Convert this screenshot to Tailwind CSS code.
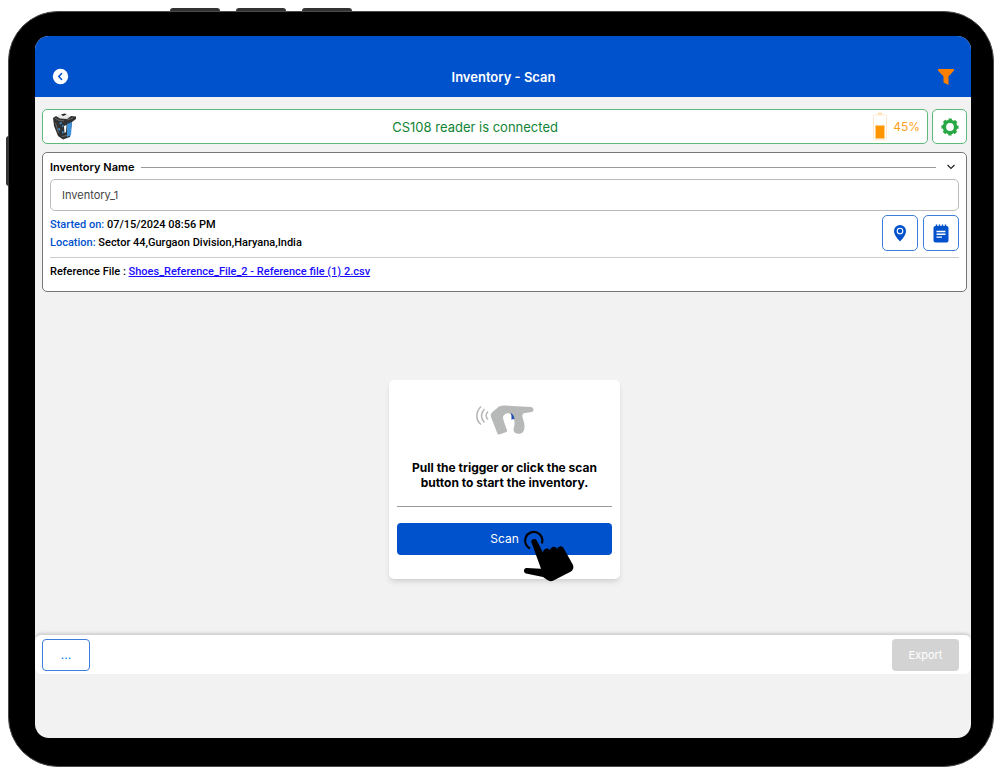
<!DOCTYPE html>
<html lang="en">
<head>
  <meta charset="UTF-8">
  <meta name="viewport" content="width=device-width, initial-scale=1.0">
  <title>Inventory - Scan</title>
  <script src="https://cdn.jsdelivr.net/npm/@tailwindcss/browser@4"></script>
</head>
<body class="bg-white font-['Inter',sans-serif] text-black">
  <div class="flex min-h-screen flex-col pt-2 pr-[6px] pb-[7px] pl-2">
    <!-- Tablet hardware buttons -->
    <div class="flex gap-4 pl-[162px]">
      <span class="h-[3px] w-[50px] rounded-t-sm bg-[#333]"></span>
      <span class="h-[3px] w-[50px] rounded-t-sm bg-[#333]"></span>
      <span class="h-[3px] w-[50px] rounded-t-sm bg-[#333]"></span>
    </div>

    <!-- Tablet frame -->
    <div class="relative flex flex-1 flex-col rounded-[50px] border border-[#4a4a4a] bg-black pt-6 pr-[22px] pb-7 pl-[26px]">
      <span class="absolute top-[124px] -left-[3px] h-[50px] w-[3px] rounded-l-sm bg-[#333]"></span>

      <div class="flex flex-1 flex-col overflow-hidden rounded-[14px] bg-[#f2f2f2]">
        <header class="flex items-center bg-[#0052cc] px-[17px] pt-[30px] pb-[10px]">
          <button type="button" aria-label="Back" class="flex h-[21px] w-[17px] items-center">
            <svg class="h-[17px] w-[17px]" viewBox="0 0 17 17" fill="none">
              <circle cx="8.5" cy="8.5" r="7.7" fill="#fff" />
              <path d="M9.6 5.6 6.8 8.5l2.8 2.9" stroke="#0052cc" stroke-width="1.5" stroke-linecap="round" stroke-linejoin="round" />
            </svg>
          </button>
          <h1 class="flex-1 text-center text-[13px] leading-5 font-semibold text-white">Inventory - Scan</h1>
          <button type="button" aria-label="Filter" class="flex h-[21px] w-4 items-center">
            <svg class="h-[18px] w-4" viewBox="0 0 16 18">
              <path d="M0 1h16v1.400L10.500 8.500v8.500L5.500 14.600V8.500L0 2.400z" fill="#ff7f00" />
            </svg>
          </button>
        </header>

        <main class="flex flex-1 flex-col gap-2 pt-3 pr-1 pl-[7px]">
          <div class="flex gap-1">
            <div class="flex h-[35px] flex-1 items-center rounded-[5px] border border-[#5fb97c] bg-white pr-[7px] pl-[10px]">
              <!-- RFID reader -->
              <svg class="h-[27px] w-6" viewBox="0 0 24 27">
                <path d="M5 2 15 1l2 3-5 3-7-1z" fill="#e9e9e9" />
                <path d="M8 1.5 12 .5l1.5 1L10 3z" fill="#222" />
                <path d="M0 5l3-2 4 2.5 7 .5 4-3 5 .5V6l-4 3-2 15-7 2.500L5 23 1 13z" fill="#2f3133" />
                <path d="M14 11l5-2-1 13-4 2z" fill="#3d8fd6" />
                <path d="M11 13l2.500-1-.5 7-1.500 1z" fill="#fff" />
                <path d="M6 10l3-1-1 2.500zM5 15l2.500 1L6 18zM9 18l2 1-1.500 2zM9 12l2 .5-1.500 2z" fill="#3d9be6" />
                <path d="M2 5l3 2 6 1M2.500 10l3 10M14 7l6-2M9 23.500l5-1" stroke="#777" stroke-width=".8" fill="none" />
              </svg>
              <p class="flex-1 text-center text-[13px] leading-5 text-[#128436]">CS108 reader is connected</p>
              <svg class="mr-[6px] h-[29px] w-[14px]" viewBox="0 0 14 29">
                <path d="M4.500 2.500a2.500 2 0 0 1 5 0z" fill="#ffd9a0" />
                <rect x=".5" y="3" width="13" height="25" rx="1.5" fill="#fff" stroke="#ffe9cc" />
                <rect x="2.5" y="13.5" width="9" height="13" fill="#ff9500" />
              </svg>
              <span class="text-xs text-[#ff9f1a]">45%</span>
            </div>
            <button type="button" aria-label="Reader settings" class="flex h-[35px] w-[35px] items-center justify-center rounded-[5px] border border-[#5fb97c] bg-white">
              <svg class="h-[18px] w-[18px]" viewBox="0 0 18 18" fill="none" stroke="#28a745">
                <circle cx="9" cy="9" r="5.600" stroke-width="3.400" />
                <circle cx="9" cy="9" r="7.600" stroke-width="2" stroke-dasharray="3.400 2.569" stroke-dashoffset="1.700" />
              </svg>
            </button>
          </div>

          <section class="rounded-[5px] border border-[#777] bg-white px-[7px] pb-[10px]">
            <div class="flex h-[26px] items-center gap-[7px] pt-[2px]">
              <label for="inventory-name" class="text-[11px] font-semibold">Inventory Name</label>
              <span class="h-px flex-1 bg-[#999]"></span>
              <button type="button" aria-label="Collapse details" class="flex h-4 w-4 items-center justify-center">
                <svg class="h-[6px] w-2" viewBox="0 0 8 6" fill="none" stroke="#222" stroke-width="1.2">
                  <path d="M.5 1 4 4.5 7.5 1" />
                </svg>
              </button>
            </div>
            <input id="inventory-name" type="text" value="Inventory_1" class="block h-8 w-full rounded-[5px] border border-[#bbb] bg-white px-[11px] text-[11px] text-[#444]">

            <div class="flex items-start justify-between pt-1">
              <div class="pt-px font-['Roboto',sans-serif] text-[11px] leading-[18px] font-medium">
                <p><span class="text-[#0052cc]">Started on:</span> 07/15/2024 08:56 PM</p>
                <p><span class="text-[#0052cc]">Location:</span> Sector 44,Gurgaon Division,Haryana,India</p>
              </div>
              <div class="flex gap-[5px]">
                <button type="button" aria-label="Show location" class="flex h-9 w-9 items-center justify-center rounded-[5px] border border-[#3f7ddd] bg-white">
                  <svg class="h-[17px] w-3" viewBox="0 0 12 17" fill="#0052cc">
                    <path d="M6 0a6 6 0 0 1 6 6c0 3.800-3.300 7.600-6 10.500C3.300 13.600 0 9.800 0 6a6 6 0 0 1 6-6z" />
                    <circle cx="6" cy="6" r="2.800" stroke="#fff" stroke-width="1.100" />
                  </svg>
                </button>
                <button type="button" aria-label="Notes" class="flex h-9 w-9 items-center justify-center rounded-[5px] border border-[#3f7ddd] bg-white">
                  <svg class="h-[19px] w-4" viewBox="0 0 16 19">
                    <rect x=".5" y="2" width="15" height="16.5" rx="2" fill="#0052cc" />
                    <path d="M3.500.5v3M6.500.5v3M9.500.5v3M12.500.5v3" stroke="#0052cc" stroke-width="1.5" />
                    <path d="M3.500 7.500h9M3.500 10.300h9M3.500 13.100h5.500" stroke="#fff" stroke-width="1.4" />
                  </svg>
                </button>
              </div>
            </div>

            <p class="mt-[5px] border-t border-[#ccc] pt-[5px] font-['Roboto',sans-serif] text-[11px] leading-[18px] font-medium">
              Reference File : <a href="#" class="text-[#1a0dff] underline">Shoes_Reference_File_2 - Reference file (1) 2.csv</a>
            </p>
          </section>

          <section class="mt-20 flex w-[231px] flex-col self-center rounded-[5px] bg-white px-2 pt-6 pb-6 shadow-md">
            <!-- Handheld scanner with signal waves -->
            <svg class="h-8 w-[58px] self-center" viewBox="0 0 58 32" fill="none">
              <path d="M5 2.500C-.5 8-.5 16 5 20.500M8.500 5c-4 4-4 9.500 0 13.500M12 7.500c-2.500 2.500-2.500 5.500 0 8" stroke="#b7b9b9" stroke-width="1.600" />
              <path d="M23 2.500C25 1.700 27 1.600 29 1.600L55 3c3 .2 3.500 4.500.5 5L49 9c-2 .3-3 1.500-2.500 4 .8 3 2 6 2 9 0 5-2 7.800-5.500 7.800-3 0-5.500-1.300-5.500-4 .5-3 1.500-6 .8-9.300L36 11.500C34 7.500 28 9 27 13c0 3 3 10 4 13 .5 1.500-.5 2-2 2.500l-5 1.800c-1.500.4-2.200.2-2.800-1.300L15 13c-.8-2.500.5-4 2-5.500z" fill="#b7b9b9" />
              <path d="M34.500 9c2 .8 3.500 2.500 4 6l-3.200.5c.5-2.500.2-4.500-.8-6.500z" fill="#1f4fb0" />
            </svg>
            <p class="pt-6 text-center text-xs leading-[15px] font-bold">Pull the trigger or click the scan<br>button to start the inventory.</p>
            <hr class="mt-4 border-[#999]">
            <button type="button" class="relative mt-4 h-8 rounded bg-[#0052cc] text-xs text-white">
              Scan
              <!-- Tapping hand -->
              <svg class="absolute top-[7px] left-[126px] h-[52px] w-[52px]" viewBox="0 0 52 52" fill="#000">
                <path d="M7 18.500A8.700 8.700 0 1 1 19 13.500" fill="none" stroke="#000" stroke-width="2.200" />
                <path d="M8.500 12.500c-1.200-3 3.700-5 5.200-2l6.300 12c.5-4 5-5.500 7-2 .5-4 5.500-5 7.200-1.500 1-3.500 5-3.800 6.500-.8L50 35c1 3 0 5-2 6.500L30.500 50.500c-2.500 1.200-4.500.7-6.500-.8L20 47 3 43.500c-3-.8-2.500-5.500.5-5.500l14.500.7z" />
              </svg>
            </button>
          </section>
        </main>

        <footer class="mb-16 flex items-center justify-between rounded-[6px] bg-white pt-1 pr-3 pb-[3px] pl-[7px] shadow-[0_-2px_3px_rgba(0,0,0,0.15)]">
          <button type="button" aria-label="More actions" class="h-8 w-12 rounded border border-[#3f7ddd] bg-white text-xs text-[#007aff]">...</button>
          <button type="button" disabled class="h-8 w-[67px] rounded bg-[#d3d3d3] text-[11px] text-white">Export</button>
        </footer>
      </div>
    </div>
  </div>
</body>
</html>
